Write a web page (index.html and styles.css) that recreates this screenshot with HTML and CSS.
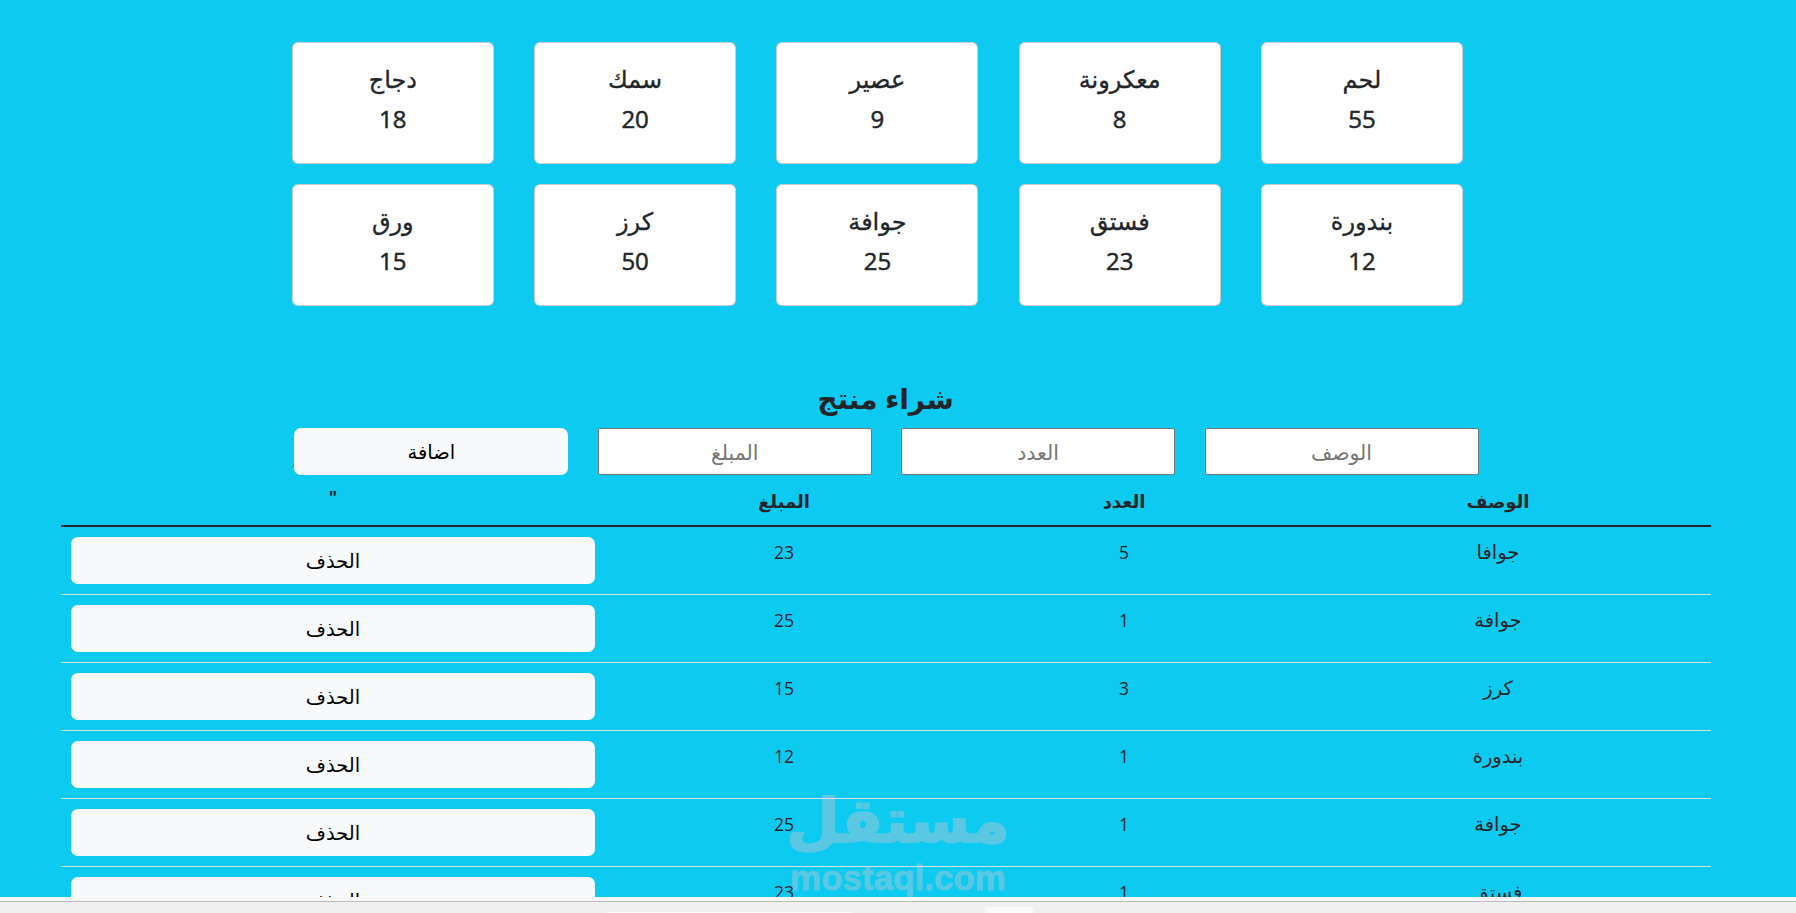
FILE: index.html
```html
<!DOCTYPE html>
<html lang="ar" dir="rtl">
<head>
  <meta charset="UTF-8">
  <title>شراء منتج</title>
  <link rel="stylesheet" href="styles.css">
</head>
<body>
  <main class="page">
    <section class="cards">
      <div class="card"><h5>لحم</h5><p>55</p></div>
      <div class="card"><h5>معكرونة</h5><p>8</p></div>
      <div class="card"><h5>عصير</h5><p>9</p></div>
      <div class="card"><h5>سمك</h5><p>20</p></div>
      <div class="card"><h5>دجاج</h5><p>18</p></div>
      <div class="card"><h5>بندورة</h5><p>12</p></div>
      <div class="card"><h5>فستق</h5><p>23</p></div>
      <div class="card"><h5>جوافة</h5><p>25</p></div>
      <div class="card"><h5>كرز</h5><p>50</p></div>
      <div class="card"><h5>ورق</h5><p>15</p></div>
    </section>

    <h2 class="title">شراء منتج</h2>
    <form class="buy">
      <input type="text" placeholder="الوصف">
      <input type="text" placeholder="العدد">
      <input type="text" placeholder="المبلغ">
      <button type="button" class="btn">اضافة</button>
    </form>

    <table class="items">
      <thead>
        <tr><th>الوصف</th><th>العدد</th><th>المبلغ</th><th class="quote">"</th></tr>
      </thead>
      <tbody>
        <tr><td>جوافا</td><td class="num">5</td><td class="num">23</td><td><button type="button" class="btn">الحذف</button></td></tr>
        <tr><td>جوافة</td><td class="num">1</td><td class="num">25</td><td><button type="button" class="btn">الحذف</button></td></tr>
        <tr><td>كرز</td><td class="num">3</td><td class="num">15</td><td><button type="button" class="btn">الحذف</button></td></tr>
        <tr><td>بندورة</td><td class="num">1</td><td class="num">12</td><td><button type="button" class="btn">الحذف</button></td></tr>
        <tr><td>جوافة</td><td class="num">1</td><td class="num">25</td><td><button type="button" class="btn">الحذف</button></td></tr>
        <tr><td>فستق</td><td class="num">1</td><td class="num">23</td><td><button type="button" class="btn">الحذف</button></td></tr>
      </tbody>
    </table>

    <div class="watermark" dir="ltr">
      <span class="mark-ar" dir="rtl">مستقل</span>
      <span class="mark-en">mostaql.com</span>
    </div>
  </main>
  <footer class="bar">
    <span class="tab tab-wide"></span>
    <span class="tab tab-small"></span>
  </footer>
</body>
</html>
```

FILE: styles.css
```css
html,body{height: 100%;margin: 0;}
body{
  display: flex;
  flex-direction: column;
  overflow: hidden;
  font-family: "Open Sans", "DejaVu Sans", sans-serif;
  font-size: 19.5px;
  color: #212529;
  background: #0dcaf0;
}
.page{
  position: relative;
  flex: 1;
  width: 1771px;
  margin-right: 25px;
  overflow: hidden;
}
.cards{
  display: grid;
  grid-template-columns: repeat(5, 202px);
  gap: 20px 40.3px;
  width: 1172px;
  margin: 42px auto 0 291px;
}
.card{
  box-sizing: border-box;
  height: 122px;
  padding-top: 15px;
  text-align: center;
  background: #fff;
  border: 1px solid rgba(0,0,0,.2);
  border-radius: 6px;
}
.card h5{
  margin: 0;
  height: 42px;
  line-height: 42px;
  font-size: 24px;
  font-weight: 500;
  -webkit-text-stroke: .3px #212529;
}
.card p{
  margin: 0;
  height: 38px;
  line-height: 38px;
  font-size: 24px;
  font-weight: 500;
  -webkit-text-stroke: .5px #212529;
}
.title{
  margin: 70px 0 7px;
  height: 45px;
  line-height: 45px;
  text-align: center;
  font-size: 28px;
  font-weight: 700;
}
.buy{
  display: grid;
  grid-template-columns: repeat(4, 274px);
  gap: 29.4px;
  width: 1186px;
  margin: 0 auto 3px;
}
.buy input{
  box-sizing: border-box;
  height: 47px;
  padding: 0 8px;
  text-align: center;
  font: inherit;
  font-size: 20.5px;
  background: #fff;
  border: 1px solid #767676;
  border-radius: 2px;
}
.buy input::placeholder{color: #757575;}
.btn{
  display: block;
  box-sizing: border-box;
  width: 100%;
  height: 47px;
  font: inherit;
  color: #000;
  background: #f8f9fa;
  border: 0;
  border-radius: 7px;
}
.items{
  position: relative;
  z-index: 1;
  width: 1650px;
  margin: 0 auto 0 61px;
  table-layout: fixed;
  border-collapse: collapse;
}
.items th:nth-child(1){width: 406px;}
.items th:nth-child(2){width: 302px;}
.items th:nth-child(3){width: 338px;}
.items th,.items td{
  padding: 10px;
  line-height: 30px;
  text-align: center;
  vertical-align: top;
  font-weight: 400;
}
.items th{
  padding: 8px 10px 9px;
  font-size: 18px;
  font-weight: 700;
  border-bottom: 2px solid #212529;
}
.items td{border-bottom: 1px solid #dee2e6;}
.items .num{font-size: 17.6px;}
.items .quote{font-size: 17.6px;font-weight: 700;line-height: 23px;}
.watermark{
  position: absolute;
  left: 783px;
  top: 779px;
  width: 230px;
  text-align: center;
  color: #5bc8e3;
  font-family: "DejaVu Sans", sans-serif;
  font-weight: 700;
}
.mark-ar{display: block;font-size: 61px;line-height: 84px;-webkit-text-stroke: 2px #5bc8e3;}
.mark-en{display: block;font-size: 35px;line-height: 30px;font-family: "Liberation Sans", sans-serif;-webkit-text-stroke: .8px #5bc8e3;}
.bar{
  position: relative;
  flex: none;
  box-sizing: border-box;
  height: 16px;
  background: #f0f0f0;
  border-top: 4px solid #f8f8f8;
}
.bar::before{
  content: "";
  display: block;
  height: 1px;
  background: #bbb;
}
.tab{
  position: absolute;
  bottom: 0;
  background: #fafafa;
}
.tab-wide{left: 607px;width: 246px;height: 1px;}
.tab-small{left: 985px;width: 48px;height: 6px;border-radius: 3px 3px 0 0;}
```
